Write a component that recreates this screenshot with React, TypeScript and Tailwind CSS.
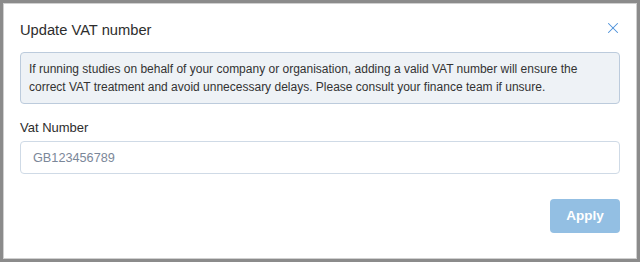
import { X } from 'lucide-react'

export default function App() {
  return (
    <div className="flex h-[262px] w-[640px] bg-[#8b8b8b] p-[3px] font-['Liberation_Sans',Arial,sans-serif]">
      <div className="flex flex-1 flex-col border border-[#d0d0d0] bg-white px-4 pt-[16px]">
        <div className="flex items-center justify-between">
          <h2 className="text-[14.7px] leading-5 text-[#2d2d2d]">Update VAT number</h2>
          <button className="mr-[-2px] mt-[-5px] text-[#4a90d9]">
            <X size={18} strokeWidth={1.4} />
          </button>
        </div>

        <div className="mt-[12px] rounded border border-[#bccbdc] bg-[#eef2f6] px-2 py-[7px] text-[12px] leading-[18px] text-[#333]">
          If running studies on behalf of your company or organisation, adding a valid VAT number will ensure the
          correct VAT treatment and avoid unnecessary delays. Please consult your finance team if unsure.
        </div>

        <label className="mt-[14px] text-[13px] leading-5 text-[#2d2d2d]">Vat Number</label>
        <input
          placeholder="GB123456789"
          className="mt-[3px] h-[33px] rounded border border-[#cfdae6] px-3 text-[12.7px] text-[#333] outline-none placeholder:text-[#7b8799]"
        />

        <div className="mt-[25px] flex justify-end">
          <button className="h-[34px] w-[70px] rounded bg-[#93bfe3] text-[13.5px] font-semibold text-white">
            Apply
          </button>
        </div>
      </div>
    </div>
  )
}
